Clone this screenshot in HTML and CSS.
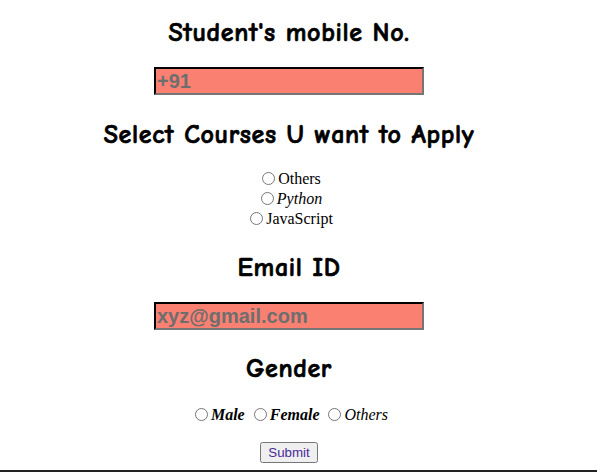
FILE: index.html
```html
<!DOCTYPE html>
<html lang="en">
<head>
    <meta charset="UTF-8">
    <meta name="viewport" content="width=device-width, initial-scale=1.0">
    <title>Course Application</title>
    <link rel="stylesheet" href="styles.css">
</head>
<body>

    <form class="apply-form">
        <h2>Student's mobile No.</h2>
        <input type="tel" class="field" placeholder="+91">

        <h2>Select Courses U want to Apply</h2>
        <div class="course-list">
            <div><input type="radio" name="course" id="others"><label for="others">Others</label></div>
            <div><input type="radio" name="course" id="python"><label for="python"><i>Python</i></label></div>
            <div><input type="radio" name="course" id="js"><label for="js">JavaScript</label></div>
        </div>

        <h2 class="tight">Email ID</h2>
        <input type="email" class="field" placeholder="xyz@gmail.com">

        <h2 class="tight">Gender</h2>
        <div class="gender-row">
            <input type="radio" name="gender" id="male"><label for="male"><b><i>Male</i></b></label>
            <input type="radio" name="gender" id="female"><label for="female"><b><i>Female</i></b></label>
            <input type="radio" name="gender" id="other"><label for="other"><i>Others</i></label>
        </div>

        <button type="submit" class="submit-btn">Submit</button>
    </form>

    <div class="footer-line"></div>

</body>
</html>
```

FILE: styles.css
```css
body {
    margin: 0;
    font-family: "Liberation Serif", "Times New Roman", serif;
    font-size: 16px;
    color: black;
    background: white;
}
.apply-form {
    width: 562px;
    margin: 0 0 0 8px;
    padding-top: 19px;
    text-align: center;
}
h2 {
    font-family: "Comic Sans MS", "Comic Neue", "Open Sans", sans-serif;
    font-weight: bold;
    font-size: 26px;
    letter-spacing: 0.65px;
    -webkit-text-stroke: 0.7px black;
    line-height: 28px;
    margin: 26px 0 20px;
}
h2.tight {
    margin-top: 25px;
}
.apply-form h2:first-child {
    margin-top: 0;
}
.field {
    display: block;
    box-sizing: border-box;
    width: 270px;
    height: 28px;
    margin: 0 auto;
    padding: 1px;
    border: 2px inset #767676;
    border-top-color: #333;
    border-left-color: #333;
    background: salmon;
    font-family: "Liberation Sans", Arial, sans-serif;
    font-size: 20px;
    font-weight: bold;
}
.field::placeholder {
    color: #6e6e6e;
}
.course-list div {
    height: 20px;
    line-height: 20px;
}
.gender-row {
    height: 20px;
    line-height: 20px;
    margin-top: 22px;
}
input[type="radio"] {
    margin: 3px 3px 0 5px;
    width: 13px;
    height: 13px;
    vertical-align: -1px;
}
.submit-btn {
    margin-top: 17px;
    font-family: "Liberation Sans", Arial, sans-serif;
    font-size: 13.33px;
    color: #4b2a9a;
}
.footer-line {
    height: 2px;
    margin-top: 7px;
    background: #222;
}
```
